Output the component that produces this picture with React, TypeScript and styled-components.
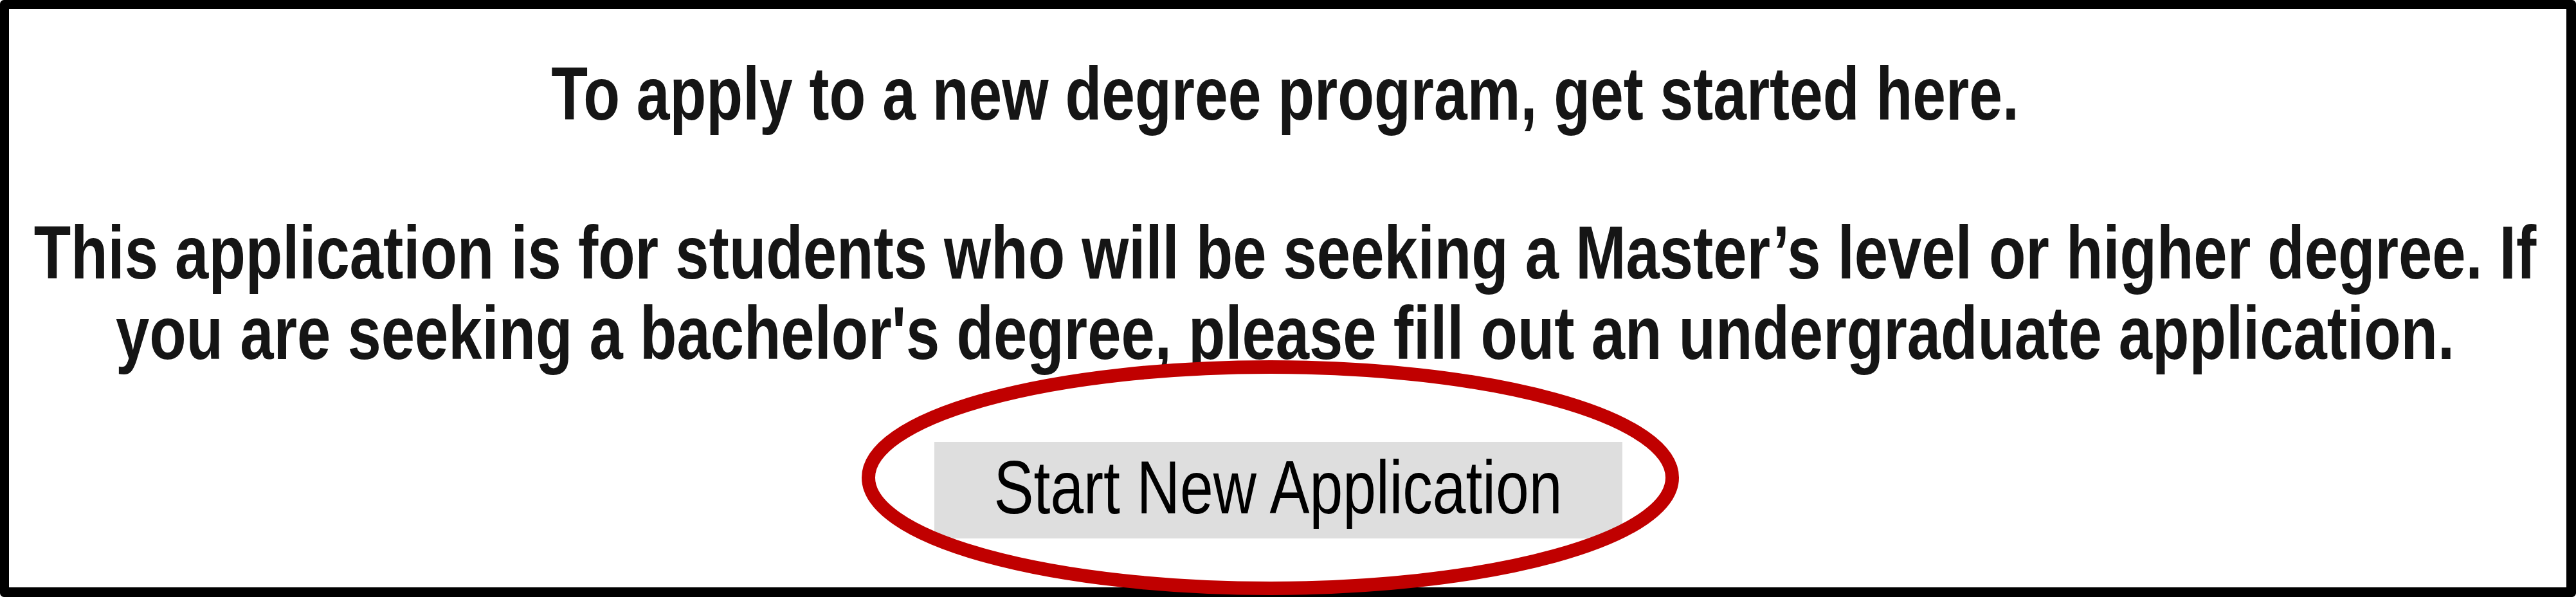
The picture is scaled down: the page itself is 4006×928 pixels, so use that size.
import React from "react";
import styled, { createGlobalStyle } from "styled-components";

const STRETCH = 1.25;

const GlobalStyle = createGlobalStyle`
  html, body {
    margin: 0;
    padding: 0;
    background: #ffffff;
  }
  body {
    font-family: "Liberation Sans", Arial, sans-serif;
  }
`;

const Panel = styled.section`
  box-sizing: border-box;
  width: 4006px;
  height: 928px;
  border-style: solid;
  border-color: #000000;
  border-width: 14px 15px 15px 14px;
  border-radius: 6px;
  background: #ffffff;
  display: flex;
  flex-direction: column;
  align-items: center;
  padding: 69px 8px 0 0;
`;

const Message = styled.p<{ $lines: number; $gap: number; $size: number }>`
  margin: 0 0 ${(p) => p.$gap}px 0;
  height: ${(p) => p.$lines * 125}px;
  font-family: "Liberation Sans", Arial, sans-serif;
  font-weight: 700;
  font-size: ${(p) => p.$size}px;
  line-height: 100px;
  color: #151515;
  text-align: center;
  white-space: nowrap;
`;

const Stretch = styled.span`
  display: block;
  transform: scaleY(${STRETCH});
  transform-origin: top center;
`;

const ButtonWrap = styled.div`
  position: relative;
  margin-right: 22px;
`;

const StartButton = styled.button`
  box-sizing: border-box;
  width: 1070px;
  height: 150px;
  padding: 0 0 8px 0;
  border: none;
  border-radius: 0;
  background: #dedede;
  color: #000000;
  font-family: "Liberation Sans", Arial, sans-serif;
  font-weight: 400;
  font-size: 93px;
  line-height: 1;
  display: flex;
  align-items: center;
  justify-content: center;
  white-space: nowrap;
  cursor: pointer;
`;

const ButtonLabel = styled.span`
  display: inline-block;
  transform: scaleY(${STRETCH});
  transform-origin: center;
`;

const Ring = styled.svg`
  position: absolute;
  left: -113px;
  top: -127px;
  width: 1271px;
  height: 365px;
  overflow: visible;
  pointer-events: none;
`;

export default function App() {
  return (
    <>
      <GlobalStyle />
      <Panel>
        <Message $lines={1} $gap={122} $size={93}>
          <Stretch>To apply to a new degree program, get started here.</Stretch>
        </Message>
        <Message $lines={2} $gap={107} $size={94}>
          <Stretch>
            This application is for students who will be seeking a Master’s level or higher degree. If
            <br />
            you are seeking a bachelor's degree, please fill out an undergraduate application.
          </Stretch>
        </Message>
        <ButtonWrap>
          <StartButton type="button">
            <ButtonLabel>Start New Application</ButtonLabel>
          </StartButton>
          <Ring viewBox="0 0 1271 365" aria-hidden="true">
            <ellipse cx="635.5" cy="182.5" rx="625" ry="172" fill="none" stroke="#c00000" strokeWidth="21" />
          </Ring>
        </ButtonWrap>
      </Panel>
    </>
  );
}
